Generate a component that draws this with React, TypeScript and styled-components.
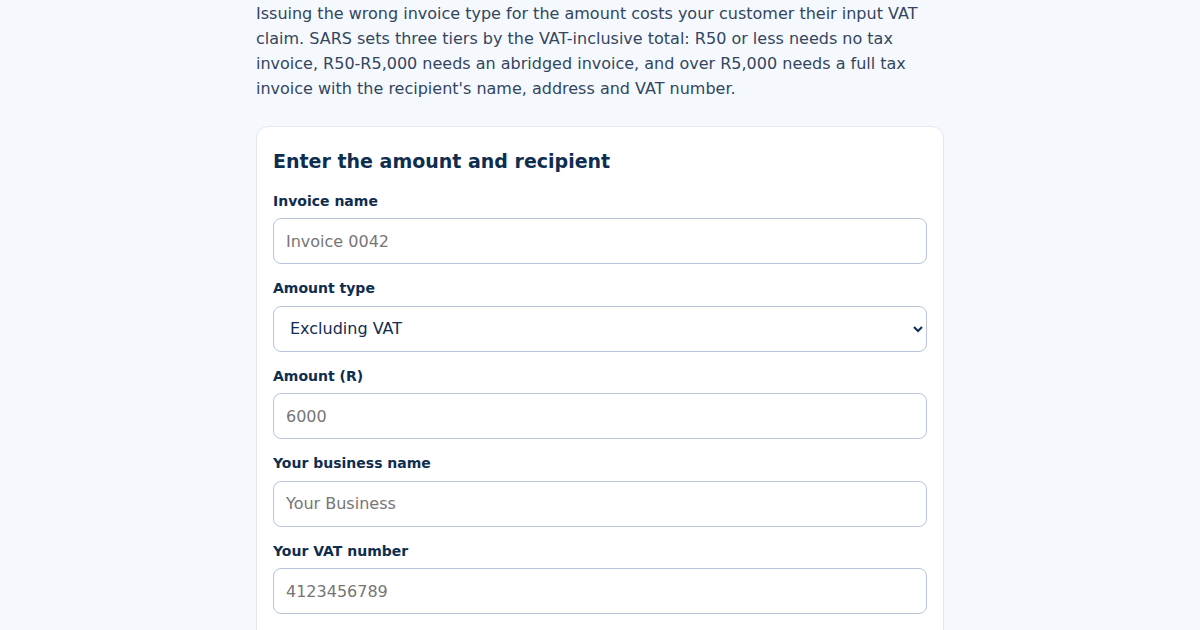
import React from 'react'
import styled, { createGlobalStyle } from 'styled-components'

const GlobalStyle = createGlobalStyle`
  html, body {
    margin: 0;
    padding: 0;
    background: #f5f9fd;
    font-family: 'DejaVu Sans', 'Liberation Sans', sans-serif;
  }
  * { box-sizing: border-box; }
`

const Page = styled.main`
  width: 688px;
  margin: 0 auto;
`

const Intro = styled.p`
  margin: 0 0 25px;
  padding-top: 1px;
  font-size: 16px;
  line-height: 25px;
  color: #334560;
`

const Card = styled.section`
  background: #ffffff;
  border: 1px solid #e1e8f0;
  border-radius: 12px;
  padding: 16px 16px 24px;
`

const Title = styled.h2`
  margin: 5.5px 0 19px;
  font-size: 19px;
  line-height: 25px;
  font-weight: 700;
  color: #0f2d4f;
`

const Field = styled.div`
  display: flex;
  flex-direction: column;
  gap: 8px;
  margin-bottom: 16px;
`

const Label = styled.label`
  font-size: 14px;
  line-height: 17.5px;
  font-weight: 700;
  color: #0f2d4f;
`

const Input = styled.input`
  height: 46px;
  width: 100%;
  padding: 0 12px;
  border: 1px solid #b9c5da;
  border-radius: 8px;
  background: #fff;
  font-family: inherit;
  font-size: 16px;
  color: #0f2d4f;
  &::placeholder { color: #767676; }
`

const Select = styled.select`
  height: 46px;
  width: 100%;
  padding: 0 12px;
  border: 1px solid #b9c5da;
  border-radius: 8px;
  background: #fff;
  font-family: inherit;
  font-size: 16px;
  color: #0f2d4f;
`

const fields = [
  { id: 'name', label: 'Invoice name', placeholder: 'Invoice 0042' },
  { id: 'type', label: 'Amount type', options: ['Excluding VAT', 'Including VAT'] },
  { id: 'amount', label: 'Amount (R)', placeholder: '6000' },
  { id: 'business', label: 'Your business name', placeholder: 'Your Business' },
  { id: 'vat', label: 'Your VAT number', placeholder: '4123456789' },
  { id: 'recipient', label: "Recipient's name", placeholder: 'Client Name' },
]

export default function App() {
  return (
    <Page>
      <GlobalStyle />
      <Intro>
        Issuing the wrong invoice type for the amount costs your customer their input VAT
        claim. SARS sets three tiers by the VAT-inclusive total: R50 or less needs no tax
        invoice, R50-R5,000 needs an abridged invoice, and over R5,000 needs a full tax
        invoice with the recipient's name, address and VAT number.
      </Intro>
      <Card>
        <Title>Enter the amount and recipient</Title>
        {fields.map((f) => (
          <Field key={f.id}>
            <Label htmlFor={f.id}>{f.label}</Label>
            {f.options ? (
              <Select id={f.id} defaultValue={f.options[0]}>
                {f.options.map((o) => (
                  <option key={o}>{o}</option>
                ))}
              </Select>
            ) : (
              <Input id={f.id} placeholder={f.placeholder} />
            )}
          </Field>
        ))}
      </Card>
    </Page>
  )
}
